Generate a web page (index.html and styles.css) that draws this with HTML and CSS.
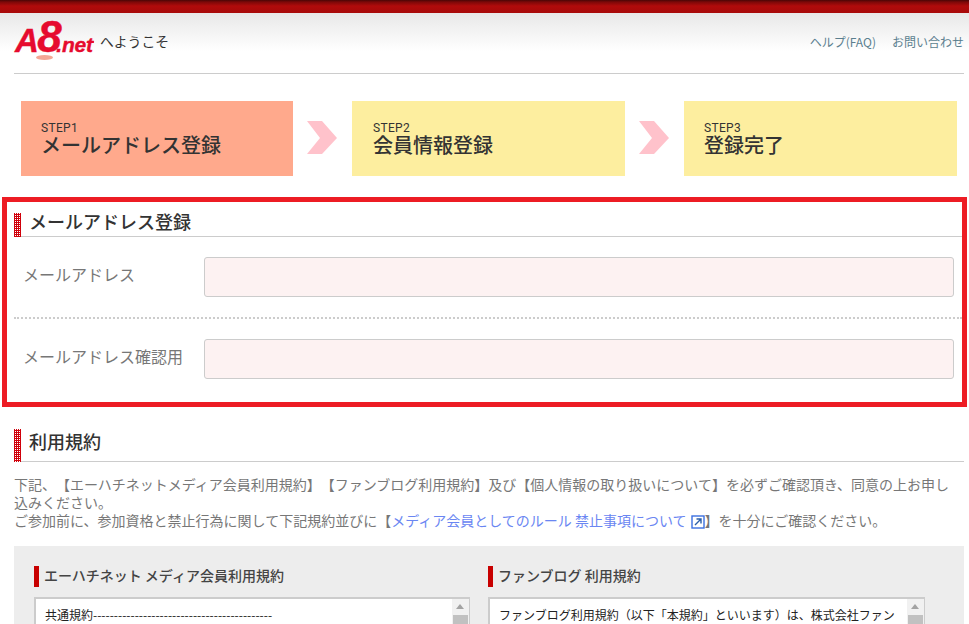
FILE: index.html
```html
<!DOCTYPE html>
<html lang="ja">
<head>
<meta charset="utf-8">
<title>A8.net へようこそ</title>
<link rel="stylesheet" href="styles.css">
</head>
<body>
<div class="topbar"></div>
<header class="header">
  <div class="header-inner">
    <div class="brand">
      <div class="logo"><span class="logo-a">A</span><span class="logo-8">8</span><span class="logo-net">.net</span><span class="logo-dot"></span><span class="logo-oval"></span></div>
      <span class="welcome">へようこそ</span>
    </div>
    <nav class="nav"><a>ヘルプ(FAQ)</a><a>お問い合わせ</a></nav>
  </div>
</header>
<ol class="steps">
  <li class="step step-active"><small>STEP1</small><strong>メールアドレス登録</strong></li>
  <li class="chev"><svg width="30" height="33" viewBox="0 0 30 33"><polygon points="0,0 15,0 30,17 15,33 0,33 13,17" fill="#ffc2cb"/></svg></li>
  <li class="step step-second"><small>STEP2</small><strong>会員情報登録</strong></li>
  <li class="chev"><svg width="30" height="33" viewBox="0 0 30 33"><polygon points="0,0 15,0 30,17 15,33 0,33 13,17" fill="#ffc2cb"/></svg></li>
  <li class="step"><small>STEP3</small><strong>登録完了</strong></li>
</ol>
<section class="highlight">
  <h2 class="title title-first">メールアドレス登録</h2>
  <div class="row row-first"><label>メールアドレス</label><div class="input"></div></div>
  <div class="row row-second"><label>メールアドレス確認用</label><div class="input"></div></div>
</section>
<section class="terms">
  <h2 class="title title-second">利用規約</h2>
  <p class="lead">下記、【エーハチネットメディア会員利用規約】【ファンブログ利用規約】及び【個人情報の取り扱いについて】を必ずご確認頂き、同意の上お申し込みください。<br>ご参加前に、参加資格と禁止行為に関して下記規約並びに【<a class="link">メディア会員としてのルール 禁止事項について<svg class="ext" width="14" height="14" viewBox="0 0 14 14"><rect x="1" y="1" width="12" height="12" fill="none" stroke="#3b6fe0" stroke-width="1.4"/><path d="M4 10 L9.5 4.5 M5.5 4 H10 V8.5" fill="none" stroke="#2c5fa8" stroke-width="1.4"/></svg></a>】を十分にご確認ください。</p>
  <div class="panel">
    <div class="col col-left">
      <h3>エーハチネット メディア会員利用規約</h3>
      <div class="box"><div class="box-text">共通規約-------------------------------------------</div><div class="scroll"><i class="arrow"></i><i class="thumb"></i></div></div>
    </div>
    <div class="col col-right">
      <h3>ファンブログ 利用規約</h3>
      <div class="box"><div class="box-text">ファンブログ利用規約（以下「本規約」といいます）は、株式会社ファン</div><div class="scroll"><i class="arrow"></i><i class="thumb"></i></div></div>
    </div>
  </div>
</section>
</body>
</html>
```
FILE: styles.css
```css
* { box-sizing: border-box; }
html, body { margin: 0; padding: 0; height: 624px; overflow: hidden; }
body { background: #fff; color: #555; font-family: "Noto Sans CJK JP", "Noto Sans", sans-serif; font-size: 14px; text-spacing-trim: space-all; }
.topbar { height: 13px; background: linear-gradient(#4a0606 0, #7d0808 2px, #b00b0b 6px, #a80a0a 13px); }
.header { height: 61px; padding: 0 5px 0 14px; background: linear-gradient(#e8e8e8 0, #fff 38px); }
.header-inner { height: 61px; display: flex; justify-content: space-between; border-bottom: 1px solid #ccc; }
.brand { display: flex; align-items: flex-start; }
.logo { position: relative; width: 86px; height: 50px; margin-top: 2px; padding-left: 1px; color: #e60b2e; font-family: "Liberation Sans", sans-serif; font-style: italic; font-weight: 700; line-height: 44px; white-space: nowrap; -webkit-text-stroke: 0.4px #e60b2e; }
.logo-a { font-size: 33px; letter-spacing: -1.5px; }
.logo-8 { font-size: 44px; letter-spacing: -5.5px; }
.logo-net { font-size: 21px; letter-spacing: -0.2px; }
.logo-dot { position: absolute; left: 78px; top: 26px; width: 2px; height: 2px; border-radius: 50%; background: #e60b2e; }
.logo-oval { position: absolute; left: 22px; top: 40px; width: 17px; height: 5px; border-radius: 50%; background: #f4a795; }
.welcome { margin: 18px 0 0; color: #333; font-size: 13.8px; line-height: 20px; }
.nav { display: flex; gap: 16px; padding-top: 20px; color: #5b7f8f; font-size: 12px; line-height: 18px; }
.steps { list-style: none; display: flex; margin: 27px 12px 0 21px; padding: 0; height: 75px; }
.step { width: 273px; padding: 21px 20px 0; background: #fdee9f; color: #333; }
.step-active { width: 272px; background: #ffa98c; }
.step-second { padding-left: 21px; }
.step small { display: block; font-family: Roboto, sans-serif; font-size: 12px; letter-spacing: 0.3px; line-height: 13px; }
.step strong { display: block; margin-top: -4px; font-size: 20px; font-weight: 500; line-height: 28px; }
.chev { width: 59px; padding: 20px 0 0 14px; }
.chev svg { display: block; }
.highlight { height: 210px; margin: 21px 2px 0 2px; padding: 11px 0 0 7px; border: 5px solid #ed1c24; }
.title { margin: 0; padding-left: 15px; color: #333; font-size: 18px; font-weight: 500; position: relative; border-bottom: 1px solid #ccc; }
.title::before { content: ""; position: absolute; left: 0; top: 0; width: 7px; bottom: -1px; background-color: #d0000a; background-image: conic-gradient(#fff 25%, transparent 0); background-size: 2px 2px; }
.title-first { height: 24px; line-height: 16px; }
.row { display: flex; align-items: center; height: 80px; padding: 0 8px 0 9px; }
.row-first { height: 82px; border-bottom: 2px dotted #ccc; }
.row-second { padding-bottom: 0; }
.row label { width: 181px; padding-bottom: 7px; font-size: 16px; color: #777; }
.input { flex: 1; height: 40px; background: #fdf2f2; border: 1px solid #ccc; border-radius: 3px; }
.terms { padding: 22px 5px 0 14px; }
.title-second { height: 33px; line-height: 25px; }
.lead { margin: 13px 0 0; padding-right: 15px; font-size: 14px; line-height: 18px; color: #777; }
.link { color: #6a86f2; }
.ext { vertical-align: -3px; margin-left: 4px; }
.panel { display: flex; height: 78px; overflow: hidden; margin-top: 17px; padding: 20px 39px 0 20px; background: #ededed; gap: 18px; }
.col-left { flex: 0 0 436px; }
.col-right { flex: 0 0 437px; }
.col h3 { margin: 0 0 10px; padding-left: 5px; height: 21px; border-left: 5px solid #c80000; color: #444; font-size: 14px; font-weight: 500; line-height: 19px; }
.box { display: flex; height: 60px; background: #fff; border: 2px solid #ccc; border-right-width: 1px; }
.box-text { flex: 1; padding: 7px 0 0 9px; color: #222; font-size: 12px; line-height: 18px; white-space: nowrap; overflow: hidden; }
.scroll { position: relative; width: 17px; background: #f1f1f1; }
.arrow { position: absolute; left: 4px; top: 5px; border: 4px solid transparent; border-top: 0; border-bottom: 5px solid #a3a3a3; }
.thumb { position: absolute; left: 1px; right: 1px; top: 16px; height: 60px; background: #c1c1c1; }
```
